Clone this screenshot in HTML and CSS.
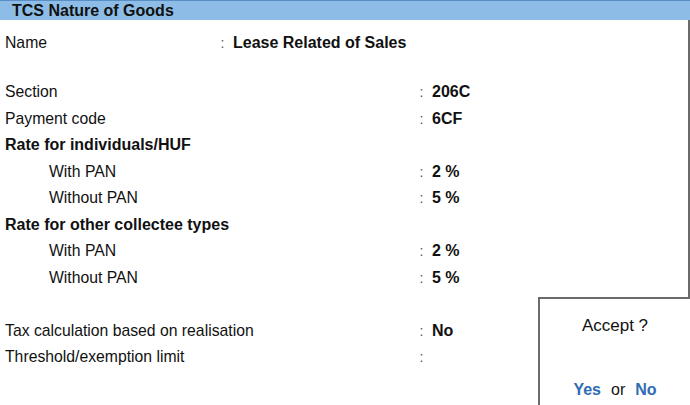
FILE: index.html
```html
<!DOCTYPE html>
<html>
<head>
<meta charset="utf-8">
<link rel="stylesheet" href="styles.css">
</head>
<body>
<div class="window">
  <div class="title">TCS Nature of Goods</div>
  <div class="content">
    <div class="row name-row">
      <span class="label name-label">Name</span>
      <span class="colon">:</span>
      <span class="value">Lease Related of Sales</span>
    </div>
    <div class="group">
      <div class="row"><span class="label">Section</span><span class="colon">:</span><span class="value">206C</span></div>
      <div class="row"><span class="label">Payment code</span><span class="colon">:</span><span class="value">6CF</span></div>
      <div class="row"><span class="label heading">Rate for individuals/HUF</span></div>
      <div class="row"><span class="label indent">With PAN</span><span class="colon">:</span><span class="value">2 %</span></div>
      <div class="row"><span class="label indent">Without PAN</span><span class="colon">:</span><span class="value">5 %</span></div>
      <div class="row"><span class="label heading">Rate for other collectee types</span></div>
      <div class="row"><span class="label indent">With PAN</span><span class="colon">:</span><span class="value">2 %</span></div>
      <div class="row"><span class="label indent">Without PAN</span><span class="colon">:</span><span class="value">5 %</span></div>
      <div class="row"></div>
      <div class="row"><span class="label">Tax calculation based on realisation</span><span class="colon">:</span><span class="value">No</span></div>
      <div class="row"><span class="label">Threshold/exemption limit</span><span class="colon">:</span><span class="value"></span></div>
    </div>
  </div>
  <div class="accept">
    <div class="accept-q">Accept ?</div>
    <div class="accept-a"><span class="opt">Yes</span><span class="or">or</span><span class="opt">No</span></div>
  </div>
</div>
</body>
</html>
```

FILE: styles.css
```css
html, body {
  margin: 0;
  padding: 0;
  background: #ffffff;
}

.window {
  position: relative;
  width: 690px;
  height: 405px;
  overflow: hidden;
  font-family: "Liberation Sans", Arial, sans-serif;
  color: #111111;
  background: #ffffff;
  display: flex;
  flex-direction: column;
}

.title {
  height: 19px;
  line-height: 20px;
  border-top: 1px solid #5a8ec6;
  background: #8dbde6;
  padding-left: 12px;
  font-size: 16px;
  font-weight: bold;
  color: #111111;
}

.content {
  flex: 1;
  border-right: 2px solid #6a6a6a;
  padding-left: 5px;
  padding-top: 10px;
  display: flex;
  flex-direction: column;
}

.group {
  margin-top: 22.5px;
  display: flex;
  flex-direction: column;
}

.row {
  height: 26.5px;
  line-height: 26.5px;
  display: flex;
  align-items: center;
  font-size: 15.75px;
  white-space: nowrap;
}

.label {
  width: 414.5px;
  flex: none;
}

.name-label {
  width: 215.5px;
}

.heading {
  font-weight: bold;
  font-size: 16px;
}

.indent {
  padding-left: 44px;
  width: 370.5px;
}

.colon {
  width: 12.5px;
  flex: none;
  color: #555555;
  font-size: 14px;
}

.value {
  font-weight: bold;
  font-size: 16px;
}

.accept {
  position: absolute;
  right: 0;
  bottom: 0;
  width: 150px;
  height: 106px;
  background: #ffffff;
  border-top: 2px solid #6a6a6a;
  border-left: 2px solid #6a6a6a;
  display: flex;
  flex-direction: column;
  align-items: center;
}

.accept-q {
  margin-top: 17px;
  font-size: 17px;
  line-height: 20px;
  color: #111111;
}

.accept-a {
  margin-top: 44px;
  font-size: 16px;
  line-height: 20px;
  display: flex;
  gap: 10px;
}

.opt {
  font-weight: bold;
  color: #2f6cb5;
}

.or {
  color: #111111;
}
```
